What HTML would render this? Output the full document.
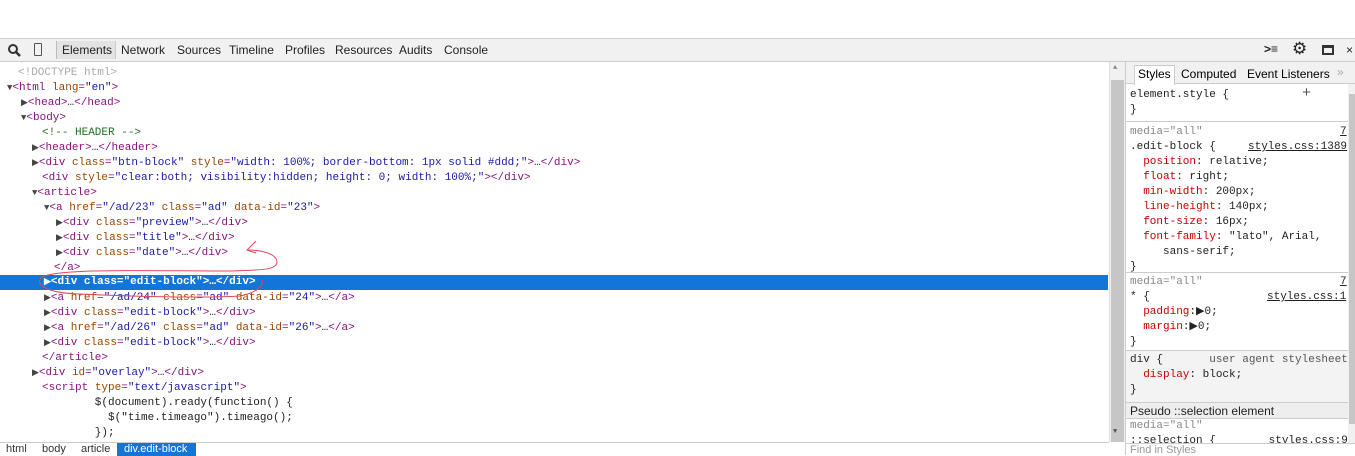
<!DOCTYPE html>
<html><head><style>
*{margin:0;padding:0;box-sizing:border-box}
body{width:1355px;height:455px;overflow:hidden;background:#fff;position:relative;font-family:"Liberation Mono",monospace;font-size:11px}
.tb{position:absolute;top:38px;left:0;width:1355px;height:24px;background:#f1f1f1;border-top:1px solid #ccc;border-bottom:1px solid #ccc;font-family:"Liberation Sans",sans-serif;font-size:12px;color:#222}
.tb span{position:absolute;top:4px}
.l{position:absolute;left:0;top:66px;width:1108px}
.r{height:15px;line-height:15px;white-space:pre;color:#881280;position:relative}
.t{color:#881280}.a{color:#994500}.v{color:#1a1aa6}.c{color:#236e25}.k{color:#222}.g{color:#aaa}
.tri{color:#444;font-size:9px}
.sel{background:#1275d8;color:#fff}
.sel span{color:#fff}
.sb{position:absolute;left:1109px;top:62px;width:16px;height:380px;background:#f1f1f1;border-left:1px solid #ddd}
.rp{position:absolute;left:1125px;top:62px;width:230px;height:393px;border-left:1px solid #ccc}
.rr{position:absolute;left:4px;white-space:pre;color:#222;line-height:15px}
.p{color:#c80000}.u{text-decoration:underline}
</style></head><body>
<div class="tb">
<svg style="position:absolute;left:8px;top:5px" width="13" height="13"><circle cx="5" cy="5" r="4" stroke="#333" stroke-width="2" fill="none"/><line x1="8" y1="8" x2="12" y2="12" stroke="#333" stroke-width="2.5"/></svg>
<div style="position:absolute;left:34px;top:4px;width:8px;height:13px;border:1px solid #555;border-radius:1px"></div>
<div style="position:absolute;left:56px;top:2px;width:60px;height:18px;background:#e3e3e3;border-left:1px solid #bbb;border-right:1px solid #ccc"></div>
<span style="left:62px">Elements</span><span style="left:121px">Network</span><span style="left:177px">Sources</span><span style="left:229px">Timeline</span><span style="left:285px">Profiles</span><span style="left:335px">Resources</span><span style="left:399px">Audits</span><span style="left:444px">Console</span>
<span style="left:1264px;font-weight:bold;top:3px">&gt;&#8801;</span>
<span style="left:1292px;font-size:17px;top:0">&#9881;</span>
<div style="position:absolute;left:1322px;top:6px;width:12px;height:10px;border:2px solid #333;border-top-width:3px"></div>
<span style="left:1346px">×</span>
</div>
<div class="l">
<div class="r g" style="padding-left:18px">&lt;!DOCTYPE html&gt;</div>
<div class="r" style="padding-left:7px"><span class="tri">▼</span>&lt;html <span class="a">lang</span>=<span class="v">"en"</span>&gt;</div>
<div class="r" style="padding-left:21px"><span class="tri">▶</span>&lt;head&gt;<span class="k">…</span>&lt;/head&gt;</div>
<div class="r" style="padding-left:21px"><span class="tri">▼</span>&lt;body&gt;</div>
<div class="r c" style="padding-left:42px">&lt;!-- HEADER --&gt;</div>
<div class="r" style="padding-left:32px"><span class="tri">▶</span>&lt;header&gt;<span class="k">…</span>&lt;/header&gt;</div>
<div class="r" style="padding-left:32px"><span class="tri">▶</span>&lt;div <span class="a">class</span>=<span class="v">"btn-block"</span> <span class="a">style</span>=<span class="v">"width: 100%; border-bottom: 1px solid #ddd;"</span>&gt;<span class="k">…</span>&lt;/div&gt;</div>
<div class="r" style="padding-left:42px">&lt;div <span class="a">style</span>=<span class="v">"clear:both; visibility:hidden; height: 0; width: 100%;"</span>&gt;&lt;/div&gt;</div>
<div class="r" style="padding-left:32px"><span class="tri">▼</span>&lt;article&gt;</div>
<div class="r" style="padding-left:44px"><span class="tri">▼</span>&lt;a <span class="a">href</span>=<span class="v">"/ad/23"</span> <span class="a">class</span>=<span class="v">"ad"</span> <span class="a">data-id</span>=<span class="v">"23"</span>&gt;</div>
<div class="r" style="padding-left:56px"><span class="tri">▶</span>&lt;div <span class="a">class</span>=<span class="v">"preview"</span>&gt;<span class="k">…</span>&lt;/div&gt;</div>
<div class="r" style="padding-left:56px"><span class="tri">▶</span>&lt;div <span class="a">class</span>=<span class="v">"title"</span>&gt;<span class="k">…</span>&lt;/div&gt;</div>
<div class="r" style="padding-left:56px"><span class="tri">▶</span>&lt;div <span class="a">class</span>=<span class="v">"date"</span>&gt;<span class="k">…</span>&lt;/div&gt;</div>
<div class="r" style="padding-left:54px">&lt;/a&gt;</div>
<div class="r sel" style="padding-left:44px;font-weight:bold;top:-1px"><span class="tri">▶</span>&lt;div class="edit-block"&gt;…&lt;/div&gt;</div>
<div class="r" style="padding-left:44px"><span class="tri">▶</span>&lt;a <span class="a">href</span>=<span class="v">"/ad/24"</span> <span class="a">class</span>=<span class="v">"ad"</span> <span class="a">data-id</span>=<span class="v">"24"</span>&gt;<span class="k">…</span>&lt;/a&gt;</div>
<div class="r" style="padding-left:44px"><span class="tri">▶</span>&lt;div <span class="a">class</span>=<span class="v">"edit-block"</span>&gt;<span class="k">…</span>&lt;/div&gt;</div>
<div class="r" style="padding-left:44px"><span class="tri">▶</span>&lt;a <span class="a">href</span>=<span class="v">"/ad/26"</span> <span class="a">class</span>=<span class="v">"ad"</span> <span class="a">data-id</span>=<span class="v">"26"</span>&gt;<span class="k">…</span>&lt;/a&gt;</div>
<div class="r" style="padding-left:44px"><span class="tri">▶</span>&lt;div <span class="a">class</span>=<span class="v">"edit-block"</span>&gt;<span class="k">…</span>&lt;/div&gt;</div>
<div class="r" style="padding-left:42px">&lt;/article&gt;</div>
<div class="r" style="padding-left:32px"><span class="tri">▶</span>&lt;div <span class="a">id</span>=<span class="v">"overlay"</span>&gt;<span class="k">…</span>&lt;/div&gt;</div>
<div class="r" style="padding-left:42px">&lt;script <span class="a">type</span>=<span class="v">"text/javascript"</span>&gt;</div>
<div class="r k" style="padding-left:42px">        $(document).ready(function() {</div>
<div class="r k" style="padding-left:42px">          $("time.timeago").timeago();</div>
<div class="r k" style="padding-left:42px">        });</div>
</div>
<svg style="position:absolute;left:0;top:0" width="300" height="310"><path d="M256 241 L247 250 L256 253 M248 250 C262 250,277 254,277 262 C277 270,262 270,230 271 C150 271,60 268,42 277 C34 284,45 293,80 294 C140 297,210 298,240 296 C258 292,264 286,262 279" fill="none" stroke="#e0485a" stroke-width="1"/></svg>
<div style="position:absolute;left:0;top:442px;width:1109px;height:13px;background:#fff;border-top:1px solid #ccc;font-family:'Liberation Sans',sans-serif;font-size:11px;color:#333">
<span style="position:absolute;left:6px;top:0">html</span><span style="position:absolute;left:42px;top:0">body</span><span style="position:absolute;left:81px;top:0">article</span>
<span style="position:absolute;left:117px;top:0;width:79px;height:13px;background:#1275d8;color:#fff;padding-left:7px">div.edit-block</span></div>
<div class="sb"><div style="position:absolute;left:1px;top:18px;width:13px;height:362px;background:#c6c6c6"></div><span style="position:absolute;left:3px;top:2px;font-size:7px;color:#888">▲</span><span style="position:absolute;left:3px;top:366px;font-size:7px;color:#555">▼</span></div>
<div class="rp">
<div style="position:absolute;left:0;top:0;width:230px;height:22px;background:#f1f1f1;border-bottom:1px solid #ccc;font-family:'Liberation Sans',sans-serif;font-size:12px">
<span style="position:absolute;left:8px;top:3px;height:20px;border:1px solid #ccc;border-bottom:none;background:#fff;padding:1px 3px">Styles</span>
<span style="position:absolute;left:55px;top:5px">Computed</span><span style="position:absolute;left:121px;top:5px">Event Listeners</span><span style="position:absolute;left:211px;top:3px;color:#aaa">»</span></div>
<div class="rr" style="top:26px">element.style {
}</div>
<span style="position:absolute;left:176px;top:23px;font-size:15px;color:#555">+</span>
<div style="position:absolute;left:0;top:59px;width:222px;border-top:1px solid #ccc"></div>
<div class="rr" style="top:63px"><span class="g" style="color:#888">media="all"</span>
.edit-block {
  <span class="p">position</span>: relative;
  <span class="p">float</span>: right;
  <span class="p">min-width</span>: 200px;
  <span class="p">line-height</span>: 140px;
  <span class="p">font-size</span>: 16px;
  <span class="p">font-family</span>: "lato", Arial,
     sans-serif;
}</div>
<div class="rr u" style="top:63px;left:214px">7</div>
<div class="rr u" style="top:78px;left:122px">styles.css:1389</div>
<div style="position:absolute;left:0;top:210px;width:222px;border-top:1px solid #ccc"></div>
<div class="rr" style="top:213px"><span style="color:#888">media="all"</span>
* {
  <span class="p">padding</span>:▶0;
  <span class="p">margin</span>:▶0;
}</div>
<div class="rr u" style="top:213px;left:214px">7</div>
<div class="rr u" style="top:228px;left:141px">styles.css:1</div>
<div style="position:absolute;left:0;top:288px;width:222px;height:55px;background:#f3f3f3;border-top:1px solid #ccc"></div>
<div class="rr" style="top:291px">div {       <span style="color:#555">user agent stylesheet</span>
  <span class="p">display</span>: block;
}</div>
<div style="position:absolute;left:0;top:340px;width:222px;height:17px;background:#eee;border-top:1px solid #ccc;border-bottom:1px solid #ccc;font-family:'Liberation Sans',sans-serif;font-size:12px;padding:1px 4px;color:#222">Pseudo ::selection element</div>
<div class="rr" style="top:357px"><span style="color:#888">media="all"</span>
::selection {        styles.css:9</div>
<div style="position:absolute;left:0;top:381px;width:230px;height:12px;background:#fff;border-top:1px solid #ccc;font-family:'Liberation Sans',sans-serif;font-size:11px;color:#999;padding-left:4px">Find in Styles</div>
<div style="position:absolute;left:222px;top:22px;width:8px;height:359px;background:#f1f1f1"><div style="margin:10px 1px;height:330px;background:#c6c6c6"></div></div>
</div>
</body></html>
